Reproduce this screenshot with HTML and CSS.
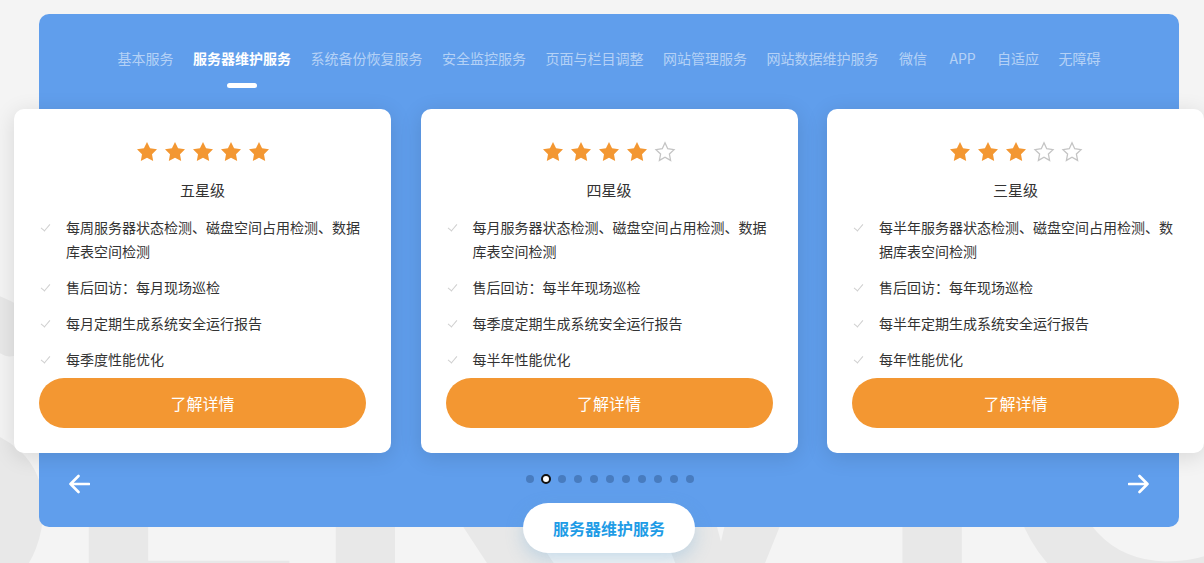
FILE: index.html
```html
<!DOCTYPE html>
<html lang="zh-CN">
<head>
<meta charset="utf-8">
<title>服务器维护服务</title>
<link rel="stylesheet" href="styles.css">
</head>
<body>
<div class="bg-word" aria-hidden="true">SERVICE</div>

<section class="panel">
  <nav class="tabs">
    <a class="tab">基本服务</a>
    <a class="tab active">服务器维护服务</a>
    <a class="tab">系统备份恢复服务</a>
    <a class="tab">安全监控服务</a>
    <a class="tab">页面与栏目调整</a>
    <a class="tab">网站管理服务</a>
    <a class="tab">网站数据维护服务</a>
    <a class="tab">微信</a>
    <a class="tab">APP</a>
    <a class="tab">自适应</a>
    <a class="tab">无障碍</a>
  </nav>

  <div class="track">
    <div class="card">
      <div class="stars">
        <svg class="star full" viewBox="0 0 24 24"><polygon points="12,2 15.09,8.26 22,9.27 17,14.14 18.18,21.02 12,17.77 5.82,21.02 7,14.14 2,9.27 8.91,8.26"/></svg>
        <svg class="star full" viewBox="0 0 24 24"><polygon points="12,2 15.09,8.26 22,9.27 17,14.14 18.18,21.02 12,17.77 5.82,21.02 7,14.14 2,9.27 8.91,8.26"/></svg>
        <svg class="star full" viewBox="0 0 24 24"><polygon points="12,2 15.09,8.26 22,9.27 17,14.14 18.18,21.02 12,17.77 5.82,21.02 7,14.14 2,9.27 8.91,8.26"/></svg>
        <svg class="star full" viewBox="0 0 24 24"><polygon points="12,2 15.09,8.26 22,9.27 17,14.14 18.18,21.02 12,17.77 5.82,21.02 7,14.14 2,9.27 8.91,8.26"/></svg>
        <svg class="star full" viewBox="0 0 24 24"><polygon points="12,2 15.09,8.26 22,9.27 17,14.14 18.18,21.02 12,17.77 5.82,21.02 7,14.14 2,9.27 8.91,8.26"/></svg>
      </div>
      <h3 class="title">五星级</h3>
      <ul class="list">
        <li>每周服务器状态检测、磁盘空间占用检测、数据库表空间检测</li>
        <li>售后回访：每月现场巡检</li>
        <li>每月定期生成系统安全运行报告</li>
        <li>每季度性能优化</li>
      </ul>
      <a class="more">了解详情</a>
    </div>

    <div class="card">
      <div class="stars">
        <svg class="star full" viewBox="0 0 24 24"><polygon points="12,2 15.09,8.26 22,9.27 17,14.14 18.18,21.02 12,17.77 5.82,21.02 7,14.14 2,9.27 8.91,8.26"/></svg>
        <svg class="star full" viewBox="0 0 24 24"><polygon points="12,2 15.09,8.26 22,9.27 17,14.14 18.18,21.02 12,17.77 5.82,21.02 7,14.14 2,9.27 8.91,8.26"/></svg>
        <svg class="star full" viewBox="0 0 24 24"><polygon points="12,2 15.09,8.26 22,9.27 17,14.14 18.18,21.02 12,17.77 5.82,21.02 7,14.14 2,9.27 8.91,8.26"/></svg>
        <svg class="star full" viewBox="0 0 24 24"><polygon points="12,2 15.09,8.26 22,9.27 17,14.14 18.18,21.02 12,17.77 5.82,21.02 7,14.14 2,9.27 8.91,8.26"/></svg>
        <svg class="star empty" viewBox="0 0 24 24"><polygon points="12,2.8 14.7,8.7 21,9.6 16.4,14 17.6,20.4 12,17.3 6.4,20.4 7.6,14 3,9.6 9.3,8.7"/></svg>
      </div>
      <h3 class="title">四星级</h3>
      <ul class="list">
        <li>每月服务器状态检测、磁盘空间占用检测、数据库表空间检测</li>
        <li>售后回访：每半年现场巡检</li>
        <li>每季度定期生成系统安全运行报告</li>
        <li>每半年性能优化</li>
      </ul>
      <a class="more">了解详情</a>
    </div>

    <div class="card">
      <div class="stars">
        <svg class="star full" viewBox="0 0 24 24"><polygon points="12,2 15.09,8.26 22,9.27 17,14.14 18.18,21.02 12,17.77 5.82,21.02 7,14.14 2,9.27 8.91,8.26"/></svg>
        <svg class="star full" viewBox="0 0 24 24"><polygon points="12,2 15.09,8.26 22,9.27 17,14.14 18.18,21.02 12,17.77 5.82,21.02 7,14.14 2,9.27 8.91,8.26"/></svg>
        <svg class="star full" viewBox="0 0 24 24"><polygon points="12,2 15.09,8.26 22,9.27 17,14.14 18.18,21.02 12,17.77 5.82,21.02 7,14.14 2,9.27 8.91,8.26"/></svg>
        <svg class="star empty" viewBox="0 0 24 24"><polygon points="12,2.8 14.7,8.7 21,9.6 16.4,14 17.6,20.4 12,17.3 6.4,20.4 7.6,14 3,9.6 9.3,8.7"/></svg>
        <svg class="star empty" viewBox="0 0 24 24"><polygon points="12,2.8 14.7,8.7 21,9.6 16.4,14 17.6,20.4 12,17.3 6.4,20.4 7.6,14 3,9.6 9.3,8.7"/></svg>
      </div>
      <h3 class="title">三星级</h3>
      <ul class="list">
        <li>每半年服务器状态检测、磁盘空间占用检测、数据库表空间检测</li>
        <li>售后回访：每年现场巡检</li>
        <li>每半年定期生成系统安全运行报告</li>
        <li>每年性能优化</li>
      </ul>
      <a class="more">了解详情</a>
    </div>
  </div>

  <div class="nav">
    <svg class="arrow" viewBox="0 0 22 20"><path d="M21 10H2.5M10.5 2L2.5 10l8 8"/></svg>
    <div class="dots">
      <span class="dot"></span>
      <span class="dot active"></span>
      <span class="dot"></span>
      <span class="dot"></span>
      <span class="dot"></span>
      <span class="dot"></span>
      <span class="dot"></span>
      <span class="dot"></span>
      <span class="dot"></span>
      <span class="dot"></span>
      <span class="dot"></span>
    </div>
    <svg class="arrow" viewBox="0 0 22 20"><path d="M1 10h18.5M11.5 2l8 8-8 8"/></svg>
  </div>

  <a class="current">服务器维护服务</a>
</section>
</body>
</html>
```

FILE: styles.css
```css
* { box-sizing: border-box; }

html, body {
  margin: 0;
  padding: 0;
}

body {
  width: 1204px;
  height: 563px;
  overflow: hidden;
  position: relative;
  background: #f4f4f4;
  font-family: "Noto Sans CJK SC", "Noto Sans", sans-serif;
  color: #333;
}

.bg-word {
  position: absolute;
  left: -182px;
  top: 218px;
  font-family: "Lato", sans-serif;
  font-weight: 700;
  font-size: 440px;
  line-height: 1;
  letter-spacing: -6px;
  color: #e8e8e8;
  white-space: nowrap;
  z-index: 0;
}

.panel {
  position: relative;
  z-index: 1;
  width: 1140px;
  height: 513px;
  margin: 14px 0 0 39px;
  padding-top: 34px;
  background: #609eec;
  border-radius: 10px;
}

.tabs {
  display: flex;
  justify-content: center;
  gap: 19.5px;
}

.tab {
  display: flex;
  flex-direction: column;
  align-items: center;
  font-size: 14px;
  line-height: 20px;
  color: rgba(255, 255, 255, 0.55);
  white-space: nowrap;
  cursor: pointer;
}

.tab::after {
  content: "";
  display: block;
  width: 30px;
  height: 5px;
  margin-top: 15px;
  border-radius: 3px;
  background: transparent;
}

.tab.active {
  color: #fff;
  font-weight: 700;
}

.tab.active::after {
  background: #fff;
}

.track {
  display: flex;
  gap: 29.5px;
  margin: 21px 0 0 -25px;
}

.card {
  flex: 0 0 377px;
  height: 344px;
  padding: 33px 25px 25px;
  background: #fff;
  border-radius: 10px;
  box-shadow: 0 4px 22px rgba(0, 0, 0, 0.12);
  display: flex;
  flex-direction: column;
}

.stars {
  display: flex;
  justify-content: center;
  gap: 4px;
  height: 20px;
  align-items: center;
}

.star {
  width: 24px;
  height: 24px;
  flex: none;
}

.star.full polygon {
  fill: #f39732;
}

.star.empty polygon {
  fill: none;
  stroke: #c4c4c4;
  stroke-width: 1.3;
  stroke-linejoin: miter;
}

.title {
  margin: 18px 0 0;
  font-size: 15px;
  font-weight: 400;
  line-height: 20px;
  text-align: center;
  color: #333;
}

.list {
  list-style: none;
  margin: 15px 0 0;
  padding: 0;
  flex: 1;
}

.list li {
  position: relative;
  padding-left: 27px;
  font-size: 14px;
  line-height: 24px;
  color: #333;
  margin-bottom: 12px;
}

.list li:last-child {
  margin-bottom: 0;
}

.list li::before {
  content: "";
  position: absolute;
  left: 4px;
  top: 7px;
  width: 4px;
  height: 8px;
  border-right: 1.4px solid #cfcfcf;
  border-bottom: 1.4px solid #cfcfcf;
  transform: rotate(40deg);
}

.more {
  display: flex;
  align-items: center;
  justify-content: center;
  height: 50px;
  border-radius: 25px;
  background: #f39732;
  color: #fff;
  font-size: 16px;
  cursor: pointer;
}

.nav {
  display: flex;
  justify-content: space-between;
  align-items: flex-start;
  padding: 0 29px;
  margin-top: 21px;
}

.arrow {
  width: 22px;
  height: 20px;
  fill: none;
  stroke: #fff;
  stroke-width: 2.6;
  stroke-linecap: round;
  stroke-linejoin: round;
}

.dots {
  display: flex;
  align-items: center;
  gap: 8px;
  height: 10px;
  margin-left: 2px;
}

.dot {
  width: 8px;
  height: 8px;
  border-radius: 50%;
  background: rgba(30, 60, 110, 0.35);
}

.dot.active {
  width: 10px;
  height: 10px;
  margin: 0 -1px;
  background: #fff;
  border: 2px solid #111;
}

.current {
  position: absolute;
  left: 50%;
  bottom: -26px;
  transform: translateX(-50%);
  width: 172px;
  height: 50px;
  border-radius: 25px;
  background: #fff;
  display: flex;
  align-items: center;
  justify-content: center;
  font-size: 16px;
  font-weight: 700;
  color: #1f9ce6;
  box-shadow: 0 6px 18px rgba(90, 160, 210, 0.3);
  cursor: pointer;
}
```
